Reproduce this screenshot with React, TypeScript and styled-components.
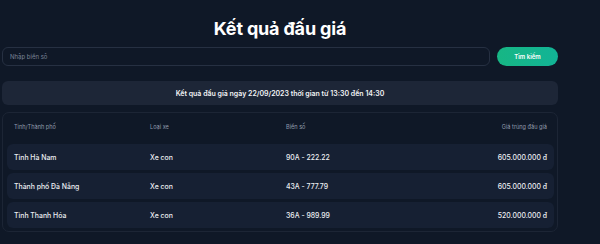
import React from "react";
import styled, { createGlobalStyle } from "styled-components";

const GlobalStyle = createGlobalStyle`
  html, body {
    margin: 0;
    padding: 0;
    background: #0f1827;
    font-family: Inter, "Noto Sans", sans-serif;
  }
`;

type Row = {
  province: string;
  type: string;
  plate: string;
  price: string;
};

const rows: Row[] = [
  { province: "Tỉnh Hà Nam", type: "Xe con", plate: "90A - 222.22", price: "605.000.000 đ" },
  { province: "Thành phố Đà Nẵng", type: "Xe con", plate: "43A - 777.79", price: "605.000.000 đ" },
  { province: "Tỉnh Thanh Hóa", type: "Xe con", plate: "36A - 989.99", price: "520.000.000 đ" },
];

const AuctionResults: React.FC = () => {
  return (
    <>
      <GlobalStyle />
      <Page>
        <Title>Kết quả đấu giá</Title>
        <SearchBar>
          <SearchInput placeholder="Nhập biển số" />
          <SearchButton>Tìm kiếm</SearchButton>
        </SearchBar>
        <Banner>Kết quả đấu giá ngày 22/09/2023 thời gian từ 13:30 đến 14:30</Banner>
        <TableCard>
          <HeaderRow>
            <HeadCell>Tỉnh/Thành phố</HeadCell>
            <HeadCell>Loại xe</HeadCell>
            <HeadCell>Biển số</HeadCell>
            <HeadCell $right>Giá trúng đấu giá</HeadCell>
          </HeaderRow>
          {rows.map((r) => (
            <DataRow key={r.plate}>
              <Cell>{r.province}</Cell>
              <Cell>{r.type}</Cell>
              <Cell>{r.plate}</Cell>
              <Cell $right>{r.price}</Cell>
            </DataRow>
          ))}
        </TableCard>
      </Page>
    </>
  );
};

const Page = styled.div`
  width: 556px;
  margin-left: 2px;
  padding-top: 16px;
  display: flex;
  flex-direction: column;
`;

const Title = styled.h1`
  margin: 0;
  text-align: center;
  font-size: 18px;
  font-weight: 700;
  line-height: 26px;
  color: #ffffff;
  letter-spacing: -0.01em;
`;

const SearchBar = styled.div`
  display: flex;
  gap: 7px;
  margin-top: 5px;
`;

const SearchInput = styled.input`
  flex: 1;
  height: 19px;
  box-sizing: border-box;
  background: #0f1827;
  border: 1px solid #263042;
  border-radius: 6px;
  padding: 0 7px;
  font-family: inherit;
  font-size: 6px;
  color: #e5e7eb;
  outline: none;

  &::placeholder {
    color: #7a8497;
  }
`;

const SearchButton = styled.button`
  width: 61px;
  height: 19px;
  border: none;
  border-radius: 10px;
  background: linear-gradient(90deg, #17b684, #12b496);
  color: #ffffff;
  font-family: inherit;
  font-size: 6px;
  font-weight: 600;
  cursor: pointer;
`;

const Banner = styled.div`
  margin-top: 15px;
  height: 24px;
  display: flex;
  align-items: center;
  justify-content: center;
  border-radius: 6px;
  background: #1d2637;
  color: #f3f4f6;
  font-size: 7px;
  font-weight: 600;
`;

const TableCard = styled.div`
  margin-top: 7px;
  border: 1px solid #1c2535;
  border-radius: 7px;
  padding: 0 3px 3px 4px;
  display: flex;
  flex-direction: column;
  gap: 3px;
`;

const Grid = styled.div`
  display: grid;
  grid-template-columns: repeat(3, 136px) 1fr;
  align-items: center;
  padding: 0 7px;
`;

const HeaderRow = styled(Grid)`
  height: 28px;
`;

const DataRow = styled(Grid)`
  height: 26px;
  border-radius: 6px;
  background: #162033;
`;

const HeadCell = styled.div<{ $right?: boolean }>`
  font-size: 5.6px;
  color: #939cad;
  text-align: ${({ $right }) => ($right ? "right" : "left")};
`;

const Cell = styled.div<{ $right?: boolean }>`
  font-size: 6.9px;
  font-weight: 500;
  color: #eceef2;
  text-align: ${({ $right }) => ($right ? "right" : "left")};
`;

export default AuctionResults;
